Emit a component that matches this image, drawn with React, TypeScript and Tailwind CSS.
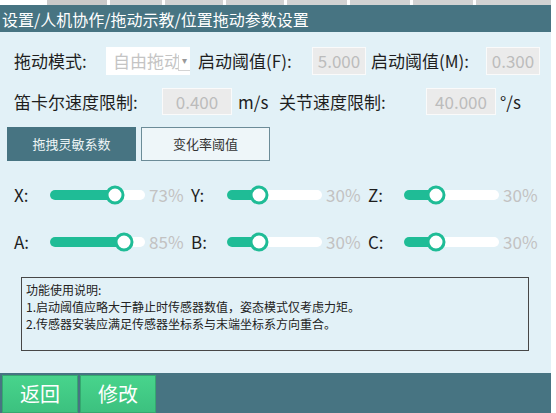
const font = { fontFamily: '"Noto Sans CJK SC", "Noto Sans", sans-serif' };

const sliders = [
  [
    { label: 'X:', value: 73 },
    { label: 'Y:', value: 30 },
    { label: 'Z:', value: 30 },
  ],
  [
    { label: 'A:', value: 85 },
    { label: 'B:', value: 30 },
    { label: 'C:', value: 30 },
  ],
];

export default function App() {
  return (
    <div className="w-[551px] h-[413px] flex flex-col bg-white overflow-hidden" style={font}>
      {/* leftover of the tab bar above */}
      <div className="h-[5px] flex gap-[3px] pl-[47px]">
        <div className="w-[60px] bg-[#c9c9c9]" />
        <div className="w-[52px] bg-[#d2d2d2]" />
        <div className="w-[58px] bg-[#d2d2d2]" />
        <div className="w-[58px] bg-[#d2d2d2]" />
        <div className="w-[60px] bg-[#d2d2d2]" />
        <div className="w-[60px] bg-[#d2d2d2]" />
        <div className="w-[60px] bg-[#d2d2d2]" />
        <div className="flex-1 bg-[#d2d2d2]" />
      </div>

      <header className="h-[27px] bg-[#477482] flex items-center pl-[2px] text-[16px] text-white leading-none">
        设置/人机协作/拖动示教/位置拖动参数设置
      </header>

      <main className="flex-1 bg-[#e2f1f7] flex flex-col text-[17px] text-[#1e1e1e]">
        <div className="mt-[15px] pl-[14px] flex items-center h-[28px]">
          <span className="w-[92px]">拖动模式:</span>
          <div className="w-[84px] h-[28px] bg-white flex items-center">
            <span className="w-[72px] overflow-hidden whitespace-nowrap text-[#c4c4c4] pl-[7px]">自由拖动</span>
            <span className="w-[12px] h-[16px] mt-[4px] border-l border-b border-[#d4d4d4] flex items-start justify-center text-[10px] text-[#999] leading-[10px]">▾</span>
          </div>
          <span className="ml-[8px] w-[114px]">启动阈值(F):</span>
          <Field value="5.000" width="w-[54px]" />
          <span className="ml-[5px] w-[115px]">启动阈值(M):</span>
          <Field value="0.300" width="w-[54px]" />
        </div>

        <div className="mt-[13px] pl-[14px] flex items-center h-[27px]">
          <span className="w-[148px]">笛卡尔速度限制:</span>
          <Field value="0.400" width="w-[70px]" />
          <span className="ml-[6px] w-[41px]">m/s</span>
          <span className="w-[147px]">关节速度限制:</span>
          <Field value="40.000" width="w-[70px]" />
          <span className="ml-[4px]">°/s</span>
        </div>

        <div className="mt-[12px] pl-[7px] flex gap-[5px]">
          <button className="w-[129px] h-[34px] bg-[#477482] text-[13px] text-[#eef4f6]">拖拽灵敏系数</button>
          <button className="w-[129px] h-[34px] bg-[#eef6f9] border border-[#6c8c98] text-[13px] text-[#333]">变化率阈值</button>
        </div>

        <div className="mt-[22px] flex flex-col gap-[23px]">
          {sliders.map((row, i) => (
            <div key={i} className="pl-[14px] flex">
              {row.map((s) => (
                <div key={s.label} className="w-[177px] h-[24px] flex items-center">
                  <span className="w-[36px]">{s.label}</span>
                  <Slider value={s.value} />
                  <span className="ml-[4px] text-[#c2c2c2]">{s.value}%</span>
                </div>
              ))}
            </div>
          ))}
        </div>

        <div className="mt-[23px] ml-[21px] w-[508px] h-[74px] border border-[#474747] px-[4px] pt-[3px] text-[12px] leading-[17px] text-[#222]">
          <p>功能使用说明:</p>
          <p>1.启动阈值应略大于静止时传感器数值，姿态模式仅考虑力矩。</p>
          <p>2.传感器安装应满足传感器坐标系与末端坐标系方向重合。</p>
        </div>
      </main>

      <footer className="h-[40px] bg-[#477482] flex gap-[2px] pl-[2px] pt-[2px]">
        <FooterButton text="返回" />
        <FooterButton text="修改" />
      </footer>
    </div>
  );
}

function Field({ value, width }: { value: string; width: string }) {
  return (
    <div className={`${width} h-full bg-[#ebebeb] border border-[#fafafa] flex items-center justify-center text-[#bcbcbc]`}>
      {value}
    </div>
  );
}

function Slider({ value }: { value: number }) {
  const pos = 9 + (value / 100) * 77;
  return (
    <div className="relative w-[95px] h-[10px] rounded-full bg-white">
      <div className="absolute left-0 top-0 h-full rounded-full bg-[#1fbc96]" style={{ width: pos }} />
      <div
        className="absolute top-1/2 w-[19px] h-[19px] -translate-x-1/2 -translate-y-1/2 rounded-full bg-white border-[3px] border-[#1fbc96]"
        style={{ left: pos }}
      />
    </div>
  );
}

function FooterButton({ text }: { text: string }) {
  return (
    <button className="w-[76px] h-[38px] bg-gradient-to-b from-[#48d48c] to-[#3cc17f] border border-[#35a86f] text-white text-[20px]">
      {text}
    </button>
  );
}
